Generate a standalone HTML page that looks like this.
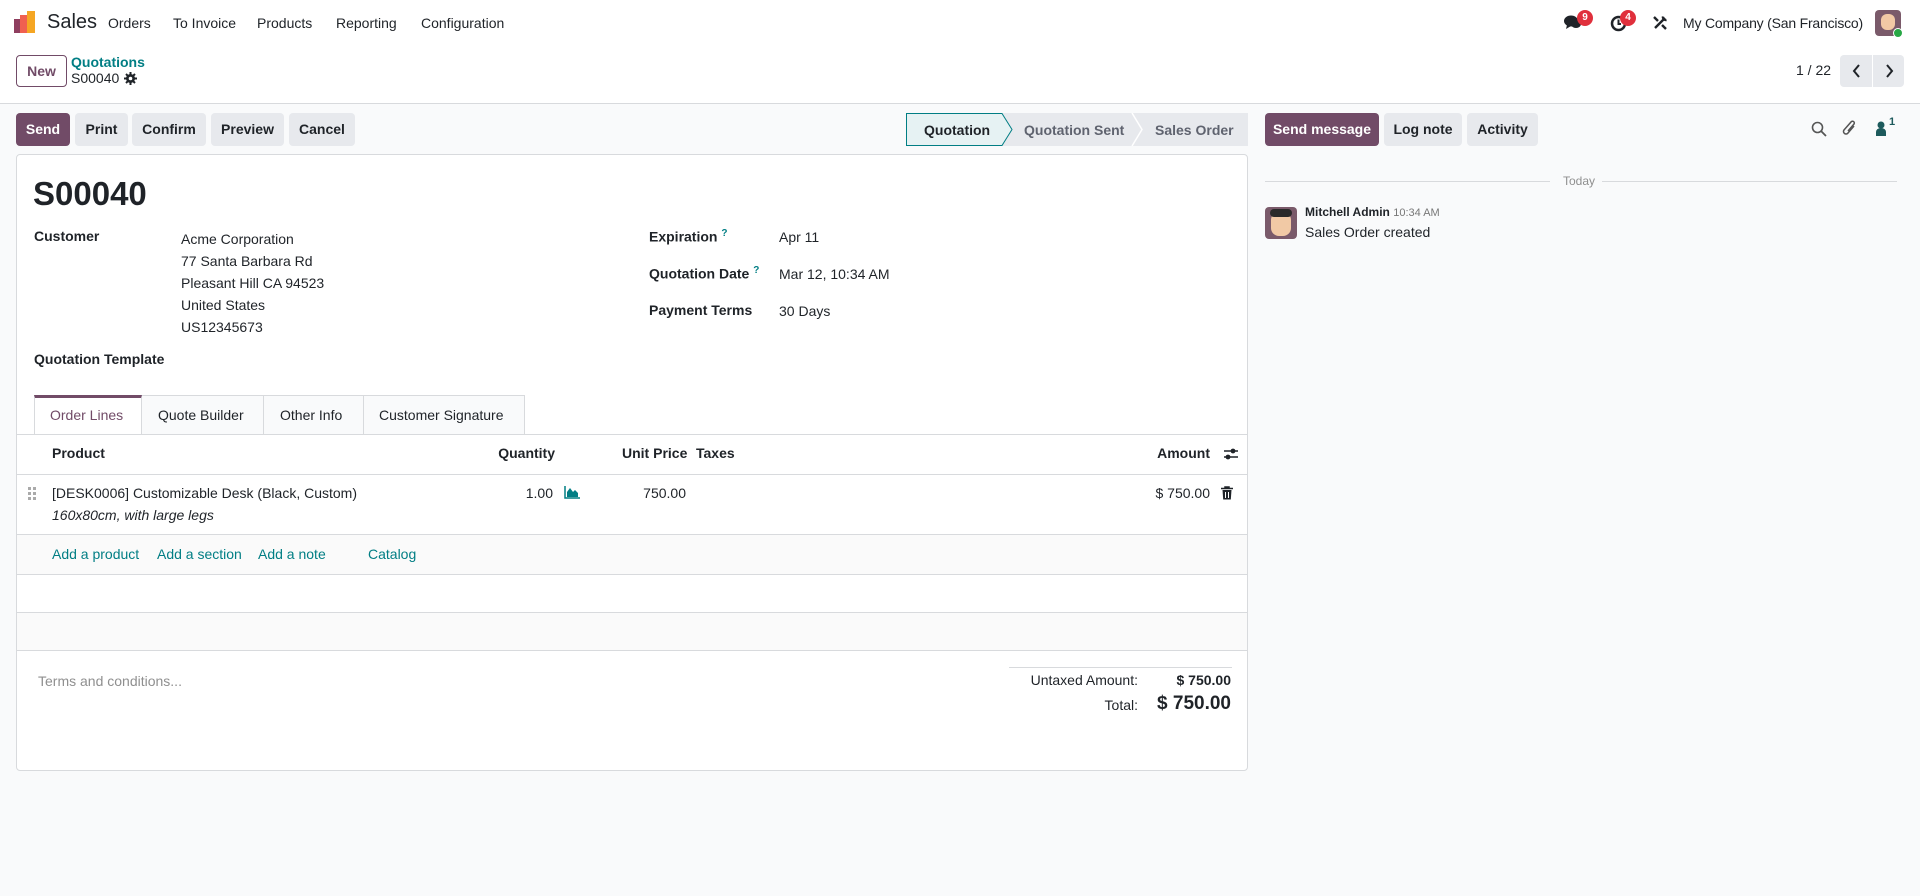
<!DOCTYPE html>
<html><head><meta charset="utf-8"><style>
*{box-sizing:border-box;margin:0;padding:0}
body{width:1920px;height:896px;overflow:hidden;font-family:"Liberation Sans",sans-serif;font-size:14px;color:#1f2328;background:#f9fafb;position:relative}
.a{position:absolute;white-space:nowrap}
.top{position:absolute;left:0;top:0;width:1920px;height:104px;background:#fff;border-bottom:1px solid #d8dadd}
.btn{position:absolute;height:33px;line-height:33px;text-align:center;font-weight:bold;font-size:14px;border-radius:4px;background:#e7e9ed;color:#1f2328}
.pri{background:#714b67;color:#fff}
.sheet{position:absolute;left:16px;top:154px;width:1232px;height:617px;background:#fff;border:1px solid #d8dadd;border-radius:4px}
.lbl{font-weight:bold}
.teal{color:#017e84}
.hl{position:absolute;left:0;width:1230px;height:1px;background:#d8dadd}
</style></head><body>
<div class="top"></div>
<svg class="a" style="left:14px;top:11px" width="24" height="24" viewBox="0 0 24 24"><rect x="0" y="8" width="8" height="14" fill="#8f3e5f"/><rect x="6" y="4" width="8" height="18" fill="#f06050"/><rect x="13" y="0" width="8" height="22" fill="#f5a623"/></svg>
<div class="a" style="left:47px;top:11px;font-size:20px">Sales</div>
<div class="a" style="left:108px;top:15px">Orders</div>
<div class="a" style="left:173px;top:15px">To Invoice</div>
<div class="a" style="left:257px;top:15px">Products</div>
<div class="a" style="left:336px;top:15px">Reporting</div>
<div class="a" style="left:421px;top:15px">Configuration</div>
<svg class="a" style="left:1564px;top:15px" width="18" height="16" viewBox="0 0 18 16"><ellipse cx="7" cy="6" rx="7" ry="5.5" fill="#1f2328"/><path d="M3 10 L2 14 L7 11Z" fill="#1f2328"/><ellipse cx="12" cy="9" rx="5" ry="4" fill="#1f2328"/></svg>
<div class="a" style="left:1577px;top:10px;width:16px;height:16px;border-radius:8px;background:#e0303c;color:#fff;font-size:10px;font-weight:bold;text-align:center;line-height:16px">9</div>
<svg class="a" style="left:1610px;top:15px" width="17" height="17" viewBox="0 0 17 17"><circle cx="8.5" cy="8.5" r="6.5" fill="none" stroke="#1f2328" stroke-width="2.5"/><path d="M8.5 4.5V9H11" stroke="#1f2328" stroke-width="2" fill="none"/></svg>
<div class="a" style="left:1620px;top:10px;width:16px;height:16px;border-radius:8px;background:#e0303c;color:#fff;font-size:10px;font-weight:bold;text-align:center;line-height:16px">4</div>
<svg class="a" style="left:1652px;top:15px" width="16" height="16" viewBox="0 0 16 16"><path d="M3 13L13 3M11 1.5a3 3 0 003.5 3.5" stroke="#1f2328" stroke-width="2.4" fill="none"/><path d="M2 2l4 4M10 10l4 4" stroke="#1f2328" stroke-width="2.4"/></svg>
<div class="a" style="left:1683px;top:15px;width:177px;text-align:right;letter-spacing:-0.2px">My Company (San Francisco)</div>
<div class="a" style="left:1875px;top:10px;width:26px;height:26px;border-radius:4px;background:#7a5a6a"></div>
<div class="a" style="left:1881px;top:14px;width:14px;height:16px;border-radius:6px;background:#f1c9a5"></div>
<div class="a" style="left:1893px;top:28px;width:10px;height:10px;border-radius:5px;background:#28a745;border:1px solid #fff"></div>
<div class="a" style="left:16px;top:55px;width:51px;height:32px;border:1px solid #714b67;border-radius:4px;color:#714b67;font-weight:bold;text-align:center;line-height:30px">New</div>
<div class="a teal" style="left:71px;top:54px;font-weight:bold;font-size:14px">Quotations</div>
<div class="a" style="left:71px;top:70px;font-size:14px">S00040</div>
<svg class="a" style="left:124px;top:72px" width="13" height="13" viewBox="0 0 13 13"><path d="M6.5 0v13M0 6.5h13M2 2l9 9M11 2l-9 9" stroke="#1f2328" stroke-width="2"/><circle cx="6.5" cy="6.5" r="4.5" fill="#1f2328"/><circle cx="6.5" cy="6.5" r="1.8" fill="#fff"/></svg>
<div class="a" style="left:1796px;top:62px">1 / 22</div>
<div class="a" style="left:1840px;top:55px;width:64px;height:32px;background:#e7e9ed;border-radius:4px"></div>
<div class="a" style="left:1872px;top:55px;width:1px;height:32px;background:#fff"></div>
<svg class="a" style="left:1851px;top:63px" width="12" height="16" viewBox="0 0 12 16"><path d="M8 2L3 8l5 6" stroke="#1f2328" stroke-width="2" fill="none"/></svg>
<svg class="a" style="left:1883px;top:63px" width="12" height="16" viewBox="0 0 12 16"><path d="M4 2l5 6-5 6" stroke="#1f2328" stroke-width="2" fill="none"/></svg>
<div class="btn pri" style="left:16px;top:113px;width:54px">Send</div>
<div class="btn" style="left:75px;top:113px;width:53px">Print</div>
<div class="btn" style="left:132px;top:113px;width:74px">Confirm</div>
<div class="btn" style="left:211px;top:113px;width:73px">Preview</div>
<div class="btn" style="left:289px;top:113px;width:66px">Cancel</div>
<svg class="a" style="left:906px;top:113px" width="342" height="33" viewBox="0 0 342 33"><rect x="0" y="0" width="342" height="33" fill="#e7e9ed"/><path d="M0.5 0.5H96L106 16.5 96 32.5H0.5Z" fill="#e6f2f3" stroke="#017e84"/><path d="M226 0l10 16.5-10 16.5" stroke="#fff" stroke-width="1.5" fill="none"/></svg>
<div class="a" style="left:924px;top:122px;font-weight:bold">Quotation</div>
<div class="a" style="left:1024px;top:122px;font-weight:bold;color:#5f636f">Quotation Sent</div>
<div class="a" style="left:1155px;top:122px;font-weight:bold;color:#5f636f">Sales Order</div>
<div class="btn pri" style="left:1265px;top:113px;width:114px">Send message</div>
<div class="btn" style="left:1384px;top:113px;width:78px">Log note</div>
<div class="btn" style="left:1467px;top:113px;width:71px">Activity</div>
<svg class="a" style="left:1811px;top:121px" width="16" height="16" viewBox="0 0 16 16"><circle cx="6.5" cy="6.5" r="5" fill="none" stroke="#555" stroke-width="1.6"/><path d="M10 10l5 5" stroke="#555" stroke-width="1.8"/></svg>
<svg class="a" style="left:1842px;top:119px" width="16" height="19" viewBox="0 0 16 19"><path d="M12 7L6 14a2.5 2.5 0 01-4-3L9 3a1.8 1.8 0 013 2L6 12" stroke="#555" stroke-width="1.5" fill="none"/></svg>
<svg class="a" style="left:1875px;top:121px" width="12" height="16" viewBox="0 0 12 16"><circle cx="6" cy="4" r="3.5" fill="#1d5a5c"/><path d="M1 15v-4a5 4 0 0110 0v4Z" fill="#1d5a5c"/></svg>
<div class="a" style="left:1889px;top:116px;font-size:11px;font-weight:bold;color:#1d5a5c">1</div>
<div class="a" style="left:1265px;top:181px;width:285px;height:1px;background:#d8dadd"></div>
<div class="a" style="left:1602px;top:181px;width:295px;height:1px;background:#d8dadd"></div>
<div class="a" style="left:1563px;top:174px;font-size:12px;color:#8f8f8f">Today</div>
<div class="a" style="left:1265px;top:207px;width:32px;height:32px;border-radius:4px;background:#7a5a6a"></div>
<div class="a" style="left:1271px;top:212px;width:20px;height:24px;border-radius:8px;background:#f1c9a5"></div>
<div class="a" style="left:1270px;top:209px;width:22px;height:8px;border-radius:4px;background:#2a2a2a"></div>
<div class="a" style="left:1305px;top:205px;font-size:12px;font-weight:bold">Mitchell Admin <span style="font-weight:normal;font-size:11px;color:#777">10:34 AM</span></div>
<div class="a" style="left:1305px;top:224px">Sales Order created</div>
<div class="sheet">
<div class="a" style="left:16px;top:20px;font-size:33px;font-weight:bold">S00040</div>
<div class="a lbl" style="left:17px;top:73px">Customer</div>
<div class="a" style="left:164px;top:73px;line-height:22px">Acme Corporation<br>77 Santa Barbara Rd<br>Pleasant Hill CA 94523<br>United States<br>US12345673</div>
<div class="a lbl" style="left:17px;top:196px">Quotation Template</div>
<div class="a lbl" style="left:632px;top:73px">Expiration <sup class="teal" style="font-size:10px">?</sup></div>
<div class="a" style="left:762px;top:74px">Apr 11</div>
<div class="a lbl" style="left:632px;top:110px">Quotation Date <sup class="teal" style="font-size:10px">?</sup></div>
<div class="a" style="left:762px;top:111px">Mar 12, 10:34 AM</div>
<div class="a lbl" style="left:632px;top:147px">Payment Terms</div>
<div class="a" style="left:762px;top:148px">30 Days</div>
<div class="a" style="left:17px;top:240px;width:491px;height:39px;background:#f9fafb;border:1px solid #d8dadd;border-bottom:none"></div>
<div class="a" style="left:17px;top:240px;width:108px;height:40px;background:#fff;border-top:3px solid #714b67;border-left:1px solid #d8dadd;border-right:1px solid #d8dadd"></div>
<div class="a" style="left:246px;top:240px;width:1px;height:39px;background:#d8dadd"></div>
<div class="a" style="left:346px;top:240px;width:1px;height:39px;background:#d8dadd"></div>
<div class="a" style="left:33px;top:252px;color:#714b67">Order Lines</div>
<div class="a" style="left:141px;top:252px">Quote Builder</div>
<div class="a" style="left:263px;top:252px">Other Info</div>
<div class="a" style="left:362px;top:252px">Customer Signature</div>
<div class="hl" style="top:279px"></div>
<div class="hl" style="top:319px"></div>
<div class="a lbl" style="left:35px;top:290px">Product</div>
<div class="a lbl" style="right:692px;top:290px">Quantity</div>
<div class="a lbl" style="left:605px;top:290px">Unit Price</div>
<div class="a lbl" style="left:679px;top:290px">Taxes</div>
<div class="a lbl" style="right:37px;top:290px">Amount</div>
<svg class="a" style="left:1206px;top:292px" width="16" height="14" viewBox="0 0 16 14"><path d="M1 4h14M1 10h14" stroke="#1f2328" stroke-width="1.6"/><circle cx="10" cy="4" r="2.4" fill="#1f2328"/><circle cx="5" cy="10" r="2.4" fill="#1f2328"/></svg>
<svg class="a" style="left:11px;top:332px" width="8" height="14" viewBox="0 0 8 14"><g fill="#aaa"><rect x="0" y="0" width="3" height="3"/><rect x="5" y="0" width="3" height="3"/><rect x="0" y="5" width="3" height="3"/><rect x="5" y="5" width="3" height="3"/><rect x="0" y="10" width="3" height="3"/><rect x="5" y="10" width="3" height="3"/></g></svg>
<div class="a" style="left:35px;top:330px">[DESK0006] Customizable Desk (Black, Custom)</div>
<div class="a" style="left:35px;top:352px;font-style:italic">160x80cm, with large legs</div>
<div class="a" style="right:694px;top:330px">1.00</div>
<svg class="a" style="left:547px;top:331px" width="16" height="13" viewBox="0 0 16 13"><path d="M1 0v12h15" stroke="#017e84" stroke-width="1.5" fill="none"/><path d="M3 11V6l3-4 3 4 2-2 3 3v4Z" fill="#017e84"/></svg>
<div class="a" style="right:561px;top:330px">750.00</div>
<div class="a" style="right:37px;top:330px">$ 750.00</div>
<svg class="a" style="left:1204px;top:331px" width="12" height="14" viewBox="0 0 12 14"><path d="M0 2.5h12M4 2.5V1h4v1.5" stroke="#1f2328" stroke-width="1.5" fill="none"/><path d="M1.5 4h9l-.7 9.5h-7.6Z" fill="#1f2328"/><path d="M4.5 6v6M7.5 6v6" stroke="#fff" stroke-width="1"/></svg>
<div class="hl" style="top:379px"></div>
<div class="a" style="left:0;top:380px;width:1230px;height:39px;background:#fafafa"></div>
<div class="a teal" style="left:35px;top:391px">Add a product</div>
<div class="a teal" style="left:140px;top:391px">Add a section</div>
<div class="a teal" style="left:241px;top:391px">Add a note</div>
<div class="a teal" style="left:351px;top:391px">Catalog</div>
<div class="hl" style="top:419px"></div>
<div class="hl" style="top:457px"></div>
<div class="a" style="left:0;top:458px;width:1230px;height:37px;background:#fafafa"></div>
<div class="hl" style="top:495px"></div>
<div class="a" style="left:21px;top:518px;color:#8f8f8f">Terms and conditions...</div>
<div class="a" style="left:992px;top:512px;width:223px;height:1px;background:#d8dadd"></div>
<div class="a" style="right:109px;top:517px">Untaxed Amount:</div>
<div class="a lbl" style="right:16px;top:517px">$ 750.00</div>
<div class="a" style="right:109px;top:542px">Total:</div>
<div class="a lbl" style="right:16px;top:538px;font-size:19px">$ 750.00</div>
</div>
</body></html>
